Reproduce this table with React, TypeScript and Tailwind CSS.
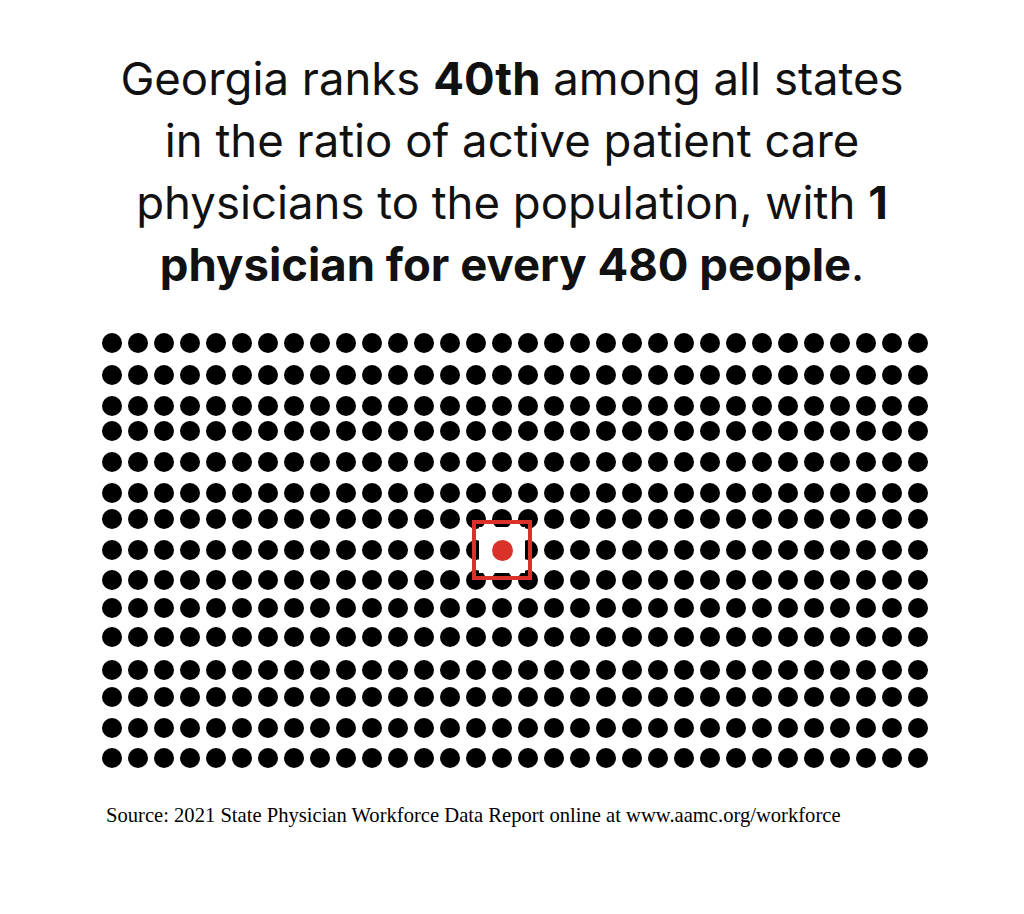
import React from "react";

const ROW_MARGINS = [
  "mt-0",
  "mt-[12px]",
  "mt-[11px]",
  "mt-[5px]",
  "mt-[11px]",
  "mt-[11px]",
  "mt-[6px]",
  "mt-[11px]",
  "mt-[10px]",
  "mt-[8px]",
  "mt-[9px]",
  "mt-[13px]",
  "mt-[7px]",
  "mt-[11px]",
  "mt-[10px]",
];

const COLS = 32;
const RED_ROW = 7;
const RED_COL = 15;

export default function App() {
  return (
    <div
      className="w-[1024px] h-[914px] bg-white text-[#111111]"
      style={{ fontFamily: "Inter, 'Noto Sans', sans-serif" }}
    >
      <div className="pt-[48px] text-center text-[45.5px] leading-[62px]">
        Georgia ranks <span className="font-bold">40th</span> among all states
        <br />
        in the ratio of active patient care
        <br />
        physicians to the population, with <span className="font-bold">1</span>
        <br />
        <span className="font-bold">physician for every 480 people</span>.
      </div>

      <div className="relative ml-[102px] mt-[37px] w-[826px]">
        {ROW_MARGINS.map((m, r) => (
          <div key={r} className={`flex gap-[6px] ${m}`}>
            {Array.from({ length: COLS }).map((_, c) =>
              r === RED_ROW && c === RED_COL ? (
                <div key={c} className="relative w-[20px] h-[20px] shrink-0">
                  <div className="absolute z-10 left-[-20px] top-[-20px] w-[60px] h-[60px] border-[4px] border-[#d8322a]">
                    <div className="absolute inset-[3px] bg-white flex items-center justify-center">
                      <div className="w-[21px] h-[21px] rounded-full bg-[#d8322a]" />
                    </div>
                  </div>
                </div>
              ) : (
                <div key={c} className="w-[20px] h-[20px] shrink-0 rounded-full bg-black" />
              )
            )}
          </div>
        ))}
      </div>

      <div
        className="ml-[106px] mt-[36px] text-[20.6px] leading-[22px] text-black"
        style={{ fontFamily: "'Liberation Serif', 'Times New Roman', serif" }}
      >
        Source: 2021 State Physician Workforce Data Report online at www.aamc.org/workforce
      </div>
    </div>
  );
}
